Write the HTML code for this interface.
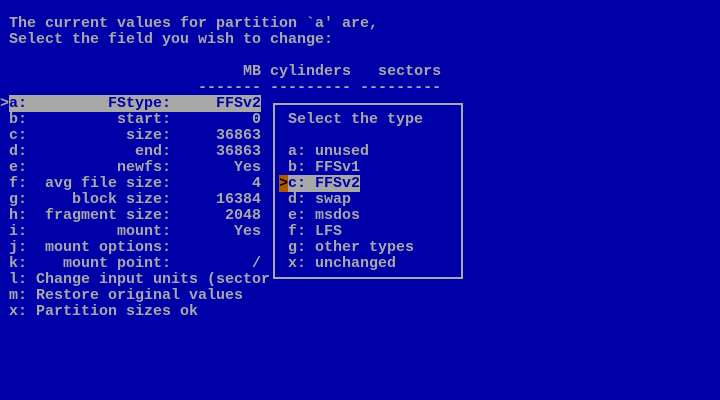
<!DOCTYPE html>
<html><head><meta charset="utf-8"><style>
html,body{margin:0;padding:0;background:#0000a8;}
body{width:720px;height:400px;position:relative;overflow:hidden;font-family:"Liberation Mono",monospace;font-size:15px;font-weight:bold;color:#a8a8a8;}
.r{position:absolute;left:0;height:16px;line-height:16px;white-space:pre;}
.hl{background:#a8a8a8;color:#0000a8;}
.box{position:absolute;left:273px;top:103px;width:186px;height:172px;border:2px solid #a8a8a8;background:#0000a8;}
.or{background:#b05800;color:#000;}
</style></head><body>
<div class="r" style="top:16px"> The current values for partition `a' are,</div>
<div class="r" style="top:32px"> Select the field you wish to change:</div>
<div class="r" style="top:64px">                           MB cylinders   sectors</div>
<div class="r" style="top:80px">                      ------- --------- ---------</div>
<div class="r" style="top:96px">&gt;<span class="hl">a:         FStype:     FFSv2</span></div>
<div class="r" style="top:112px"> b:          start:         0</div>
<div class="r" style="top:128px"> c:           size:     36863</div>
<div class="r" style="top:144px"> d:            end:     36863</div>
<div class="r" style="top:160px"> e:          newfs:       Yes</div>
<div class="r" style="top:176px"> f:  avg file size:         4</div>
<div class="r" style="top:192px"> g:     block size:     16384</div>
<div class="r" style="top:208px"> h:  fragment size:      2048</div>
<div class="r" style="top:224px"> i:          mount:       Yes</div>
<div class="r" style="top:240px"> j:  mount options:</div>
<div class="r" style="top:256px"> k:    mount point:         /</div>
<div class="r" style="top:272px"> l: Change input units (sector</div>
<div class="r" style="top:288px"> m: Restore original values</div>
<div class="r" style="top:304px"> x: Partition sizes ok</div>
<div class="box"></div>
<div class="r" style="top:112px;left:288px">Select the type</div>
<div class="r" style="top:144px;left:288px">a: unused</div>
<div class="r" style="top:160px;left:288px">b: FFSv1</div>
<div class="r" style="top:176px;left:279px"><span class="or">&gt;</span><span class="hl">c: FFSv2</span></div>
<div class="r" style="top:192px;left:288px">d: swap</div>
<div class="r" style="top:208px;left:288px">e: msdos</div>
<div class="r" style="top:224px;left:288px">f: LFS</div>
<div class="r" style="top:240px;left:288px">g: other types</div>
<div class="r" style="top:256px;left:288px">x: unchanged</div>
</body></html>
